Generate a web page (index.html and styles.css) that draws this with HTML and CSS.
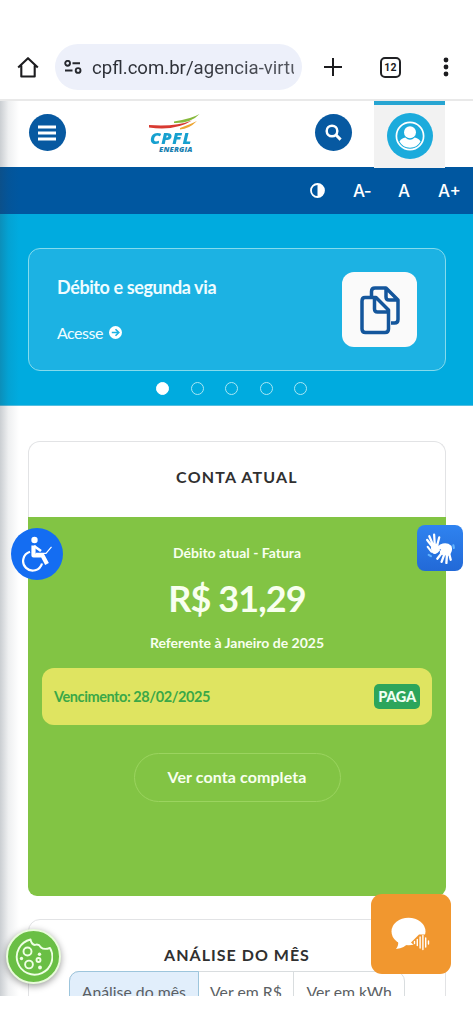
FILE: index.html
```html
<!DOCTYPE html>
<html lang="pt-BR">
<head>
<meta charset="utf-8">
<title>CPFL Energia - Agência Virtual</title>
<link rel="stylesheet" href="styles.css">
</head>
<body>
<div class="screen">
  <div class="browser">
    <svg class="home" width="22" height="22" viewBox="0 0 22 22"><path d="M1.2 11.500 11 2.200l9.800 9.300M4.300 9.500v11h13.400v-11" fill="none" stroke="#1c1c1f" stroke-width="2.100" stroke-linejoin="round"/></svg>
    <div class="address">
      <svg width="18" height="14" viewBox="0 0 18 14" fill="none" stroke="#26282e" stroke-width="1.900"><circle cx="3.600" cy="3.300" r="2.400"/><path d="M8.500 3.300H16M1 10.500h7.500"/><circle cx="14.100" cy="10.500" r="2.400"/></svg>
      <span class="url">cpfl.com.br/agencia-virtual</span>
    </div>
    <svg class="plus" width="18" height="18" viewBox="0 0 18 18"><path d="M9 0v18M0 9h18" stroke="#1c1c1f" stroke-width="2"/></svg>
    <div class="tabs-count">12</div>
    <svg class="dots" width="6" height="20" viewBox="0 0 6 20" fill="#1c1c1f"><circle cx="3" cy="3" r="2.400"/><circle cx="3" cy="10" r="2.400"/><circle cx="3" cy="17" r="2.400"/></svg>
  </div>

  <main class="page">
    <header class="header">
      <div class="round menu"><svg width="18" height="16" viewBox="0 0 18 16"><path d="M0 2h18M0 8h18M0 14h18" stroke="#fff" stroke-width="2.800"/></svg></div>
      <div class="logo">
        <svg width="51" height="17" viewBox="0 0 51 17"><path d="M0 11Q26 13 43 6.500Q27 17 0 13.500Z" fill="#d83a31"/><path d="M25 7.500Q42 5 50.500 0Q42 9.500 25 9Z" fill="#86b93b"/><path d="M31 14Q42 10 48 7Q40 15 31 15.500Z" fill="#eda532"/></svg>
        <b class="cpfl">CPFL</b><b class="energia">ENERGIA</b>
      </div>
      <div class="round search"><svg width="17" height="17" viewBox="0 0 17 17" fill="none" stroke="#fff" stroke-width="2.500"><circle cx="7" cy="7" r="5.300"/><path d="m10.800 10.800 4.800 4.800" stroke-width="3"/></svg></div>
      <div class="user"><div class="user-ring"><svg width="30" height="30" viewBox="0 0 30 30"><circle cx="15" cy="15" r="13.600" fill="none" stroke="#fff" stroke-width="1.700"/><path d="M4.500 20.500C6 17.800 8 16.700 10.300 16.400Q15 21 19.700 16.400C22 16.700 24 17.800 25.500 20.500A12 12 0 0 1 4.500 20.500Z" fill="#fff"/><circle cx="15" cy="11.200" r="6" fill="#fff"/></svg></div></div>
    </header>

    <div class="access-bar">
      <svg width="15" height="15" viewBox="0 0 15 15"><circle cx="7.500" cy="7.500" r="6.500" fill="none" stroke="#fff" stroke-width="1.800"/><path d="M7.500 1a6.500 6.500 0 0 1 0 13Z" fill="#fff"/></svg>
      <span class="small">A-</span><span class="normal">A</span><span class="large">A+</span>
    </div>

    <section class="hero">
      <div class="service">
        <div class="service-copy">
          <h2>Débito e segunda via</h2>
          <a><span>Acesse</span> <svg width="13" height="13" viewBox="0 0 13 13"><circle cx="6.500" cy="6.500" r="6.500" fill="#fff"/><path d="M2.800 6.500h6.500M6.500 3.200l3.300 3.300-3.300 3.300" fill="none" stroke="#1cb2e3" stroke-width="1.600"/></svg></a>
        </div>
        <div class="service-icon"><svg width="40" height="50" viewBox="0 0 40 50" fill="none" stroke="#14569c" stroke-width="3.500" stroke-linejoin="round"><path d="M11.500 11V6.500Q11.500 3 15 3H26L38 15V34.500Q38 38 34.500 38H31M26 3V12Q26 15 29 15H38"/><path d="M5 12.500H16L28.500 25V44Q28.500 47.500 25 47.500H5.500Q2 47.500 2 44V16Q2 12.500 5 12.500ZM14.500 12.500V24Q14.500 27 17.500 27H28.500"/></svg></div>
      </div>
      <div class="pager"><i class="on"></i><i></i><i></i><i></i><i></i></div>
    </section>

    <section class="bill">
      <h3>CONTA ATUAL</h3>
      <div class="bill-body">
        <p class="kind">Débito atual - Fatura</p>
        <p class="amount">R$ 31,29</p>
        <p class="month">Referente à Janeiro de 2025</p>
        <div class="due"><span>Vencimento: 28/02/2025</span><b>PAGA</b></div>
        <a class="full">Ver conta completa</a>
      </div>
    </section>

    <section class="analysis">
      <h3>ANÁLISE DO MÊS</h3>
      <div class="segments"><span class="active">Análise do mês</span><span class="reais">Ver em R$</span><span class="kwh">Ver em kWh</span></div>
    </section>
    <div class="edge"></div>
  </main>

  <div class="float wheelchair"><svg width="32" height="36" viewBox="0 0 32 36" fill="none" stroke="#fff"><circle cx="13.500" cy="4" r="3.200" fill="#fff" stroke="none"/><path d="M12.500 9.500v10h9l4.500 8.500" stroke-width="4.200" stroke-linejoin="round"/><path d="M13 10l7 5" stroke-width="2.700"/><path d="M15 17.300h10l5.500-6.500" stroke-width="1.200"/><path d="M9 15.800A9.600 9.600 0 1 0 21 27.500" stroke-width="2.200"/></svg></div>
  <div class="float libras"><svg width="30" height="31" viewBox="0 0 28 29" fill="none" stroke="#fff" stroke-linecap="round"><path d="M6.500 10Q6 15 7.500 18Q9.500 20 13 16L11.500 11Z" fill="#fff" stroke-width="1.800"/><path d="M5.800 11.500 2 6.500M7 10 4 3M9 9.500 8.500 1.500M11.500 11 13.300 4" stroke-width="2.100"/><path d="M6 17.500 2.500 13" stroke-width="2"/><path d="M14.500 11.500Q20 9 24 12.500Q25.500 17 22 20.500L15.500 19.500Q13 18 17 14.500L11.500 14.500Z" fill="#fff" stroke-width="1.600"/><path d="M15.500 19 11.500 24M18 20 15.500 27M20.500 20 20 28M22.500 19 24 25" stroke-width="2.200"/><path d="M3.500 20.500l2 1.200M26.500 11.500l.5 2.500" stroke="#62b3ff" stroke-width="2"/></svg></div>
  <div class="float cookie"><svg width="39" height="38" viewBox="0 0 39 38" fill="none" stroke="#efffe5" stroke-width="1.900" stroke-linejoin="round"><path d="M16.500 1.500Q17.500 6.500 21 7Q24.500 5.500 27 9.500Q30 12 36 10A17.800 17.800 0 1 1 16.500 1.500Z"/><circle cx="13.500" cy="13.500" r="4"/><circle cx="15" cy="26.500" r="3.900"/><circle cx="24.500" cy="22" r="2"/><g fill="#efffe5" stroke="none"><circle cx="7.500" cy="20.500" r="1.700"/><circle cx="25.500" cy="16.300" r="1.700"/><circle cx="26" cy="29.500" r="1.900"/></g></svg></div>
  <div class="float chat"><svg width="40" height="34" viewBox="0 0 40 34"><ellipse cx="17.500" cy="14.500" rx="17" ry="13.800" fill="#fff"/><path d="M7 24Q8 28 5 32Q14 31 17 26Z" fill="#fff"/><path d="M20 25.500 28 17.500h8v15h-8Z" fill="#f1972f"/><path d="M23.500 24.500v2M26.300 22.500v6M29.100 20v11M31.900 18.500v14M34.700 21v9M37.500 24v3" stroke="#fff" stroke-width="1.400" stroke-linecap="round"/></svg></div>
</div>
</body>
</html>
```
FILE: styles.css
```css
*{box-sizing:border-box}
body{margin:0;background:#fff;font-family:Lato,sans-serif;color:#333}
h2,h3,p{margin:0}
svg{display:block;flex:none}
.screen{position:relative;width:473px;height:1024px;overflow:hidden;background:#fff}
.browser{height:101px;padding:35px 0 0 17px;border-bottom:2px solid #e9e9e9;display:flex;align-items:center}
.home{margin-right:16px}
.address{width:247px;height:46px;border-radius:23px;background:#edf0fa;display:flex;align-items:center;padding:0 8px 0 9px;gap:10px}
.url{font:18.600px/28px Roboto,sans-serif;padding-top:1px;white-space:nowrap;overflow:hidden;flex:1;background:linear-gradient(90deg,#2d3037 45%,#555860);background-clip:text;color:transparent}
.plus{margin-left:22px}
.tabs-count{width:21px;height:21px;border:2px solid #202124;border-radius:5px;margin-left:38px;font:700 10.500px/17px Roboto,sans-serif;text-align:center;color:#202124;letter-spacing:.3px}
.dots{margin-left:42px}
.page{position:relative;height:895px;overflow:hidden}
.header{height:66px;display:flex;align-items:center;padding-left:28.500px}
.round{width:37px;height:37px;border-radius:50%;background:#0759a1;display:flex;align-items:center;justify-content:center;margin-bottom:3px}
.logo{width:52px;margin-left:83.500px;height:66px;padding-top:13px;color:#16a0cf}
.cpfl,.energia{display:block;font-family:"Open Sans",sans-serif;font-style:italic;font-weight:800;white-space:nowrap}
.cpfl{font-size:16px;line-height:14px;letter-spacing:.6px;margin-left:1px;width:max-content;transform:scaleX(1.05);transform-origin:left}
.energia{font-size:7.500px;line-height:9px;margin-left:10px;color:#187eaf;letter-spacing:.2px}
.search{margin-left:114px}
.user{width:71px;height:67px;background:#f2f2f2;border-top:4px solid #27a5d2;margin-left:22px;padding:8px 12.500px}
.user-ring{width:46px;height:46px;border-radius:50%;background:#1cabdc;display:flex;align-items:center;justify-content:center}
.access-bar{height:47px;background:#0057a0;color:#fff;display:flex;align-items:center;padding-left:310px;font:500 17px/47px Inter,sans-serif}
.access-bar span{padding-top:2px}
.small{margin-left:28px;width:45px;letter-spacing:-.8px}.normal{width:40px}.large{white-space:nowrap}
.hero{height:192px;background:#00abdf;border-bottom:1px solid #55bfe0;padding:34px 27px 0 28px}
.service{height:123px;border:1px solid #84dbed;border-radius:12px;background:#1cb2e3;display:flex;justify-content:space-between;align-items:center;padding:0 28px}
.service-copy{color:#effcff}
.service-copy h2{font-size:18px;line-height:22px;margin-bottom:24px;letter-spacing:-.4px}
.service-copy a{display:flex;align-items:center;gap:6px;font-size:16px;line-height:22px;letter-spacing:-.5px}
.service-icon{width:75px;height:75px;border-radius:12px;background:#fafafa;display:flex;align-items:center;justify-content:center}
.pager{display:flex;gap:21.500px;justify-content:center;padding:11px 11px 0 0}
.pager i{width:13px;height:13px;border:1px solid #a8e7f4;border-radius:50%}
.pager .on{background:#fff;border-color:#fff}
.bill{margin:35px 27px 0 28px;height:455px}
h3{font-size:16px;line-height:22px;letter-spacing:1.200px;text-align:center;color:#303030}
.bill h3{height:76px;padding-top:24px;border:1px solid #e2e3e5;border-bottom:0;border-radius:12px 12px 0 0}
.bill-body{height:379px;background:#82c444;border-radius:0 0 9px 9px;padding:25px 14px 0;display:flex;flex-direction:column;align-items:center;color:#f8ffef;font-weight:700}
.kind,.month{font-size:14px;line-height:22px}
.amount{font-size:36px;line-height:44px;margin:12px 0;letter-spacing:-.9px}
.due{width:390px;height:57px;border-radius:12px;background:#dfe461;margin-top:14px;display:flex;align-items:center;justify-content:space-between;padding:0 12px;font-size:14.500px;letter-spacing:-.42px;color:#3aa847}
.due b{background:#2ca55b;color:#f0fff2;border-radius:5px;width:46px;height:25px;line-height:25px;text-align:center;white-space:nowrap;letter-spacing:-.3px}
.full{width:207px;height:49px;border:1px solid #9bd45f;border-radius:25px;margin-top:28px;text-align:center;font-size:16px;line-height:46px;letter-spacing:.1px}
.analysis{margin:23px 27px 0 28px;height:120px;border:1px solid #e2e3e5;border-radius:12px;padding-top:24px}
.analysis h3{letter-spacing:1.020px}
.segments{display:flex;width:336px;height:45px;margin:5px 0 0 40px;border:1px solid #d9dddf;border-radius:10px;font-size:15.800px;line-height:39px;color:#5b5f64}
.segments span{white-space:nowrap;text-align:center}
.segments .active{background:#e1eefb;border:1px solid #9dc5dc;border-radius:10px 0 0 0;width:130px;margin:-1px 0 0 -1px}
.segments .reais{width:96px;border-right:1px solid #d9dddf}
.segments .kwh{width:110px}
.edge{position:absolute;left:0;top:0;width:19px;height:895px;background:linear-gradient(90deg,rgba(45,60,75,.25),rgba(45,60,75,.08) 45%,rgba(45,60,75,0))}
.float{position:absolute;display:flex;align-items:center;justify-content:center}
.wheelchair{left:11px;top:528px;width:52px;height:52px;border-radius:50%;background:#146df2}
.libras{left:417px;top:525px;width:46px;height:46px;border-radius:8px;background:linear-gradient(#2f83f0,#2269d7)}
.cookie{left:6px;top:929px;width:55px;height:55px;border-radius:50%;border:2px solid #e9fbdc;background:#6abf45;box-shadow:0 2px 7px #0006}
.chat{left:371px;top:894px;width:80px;height:80px;border-radius:11px;background:#f1972f}
```
